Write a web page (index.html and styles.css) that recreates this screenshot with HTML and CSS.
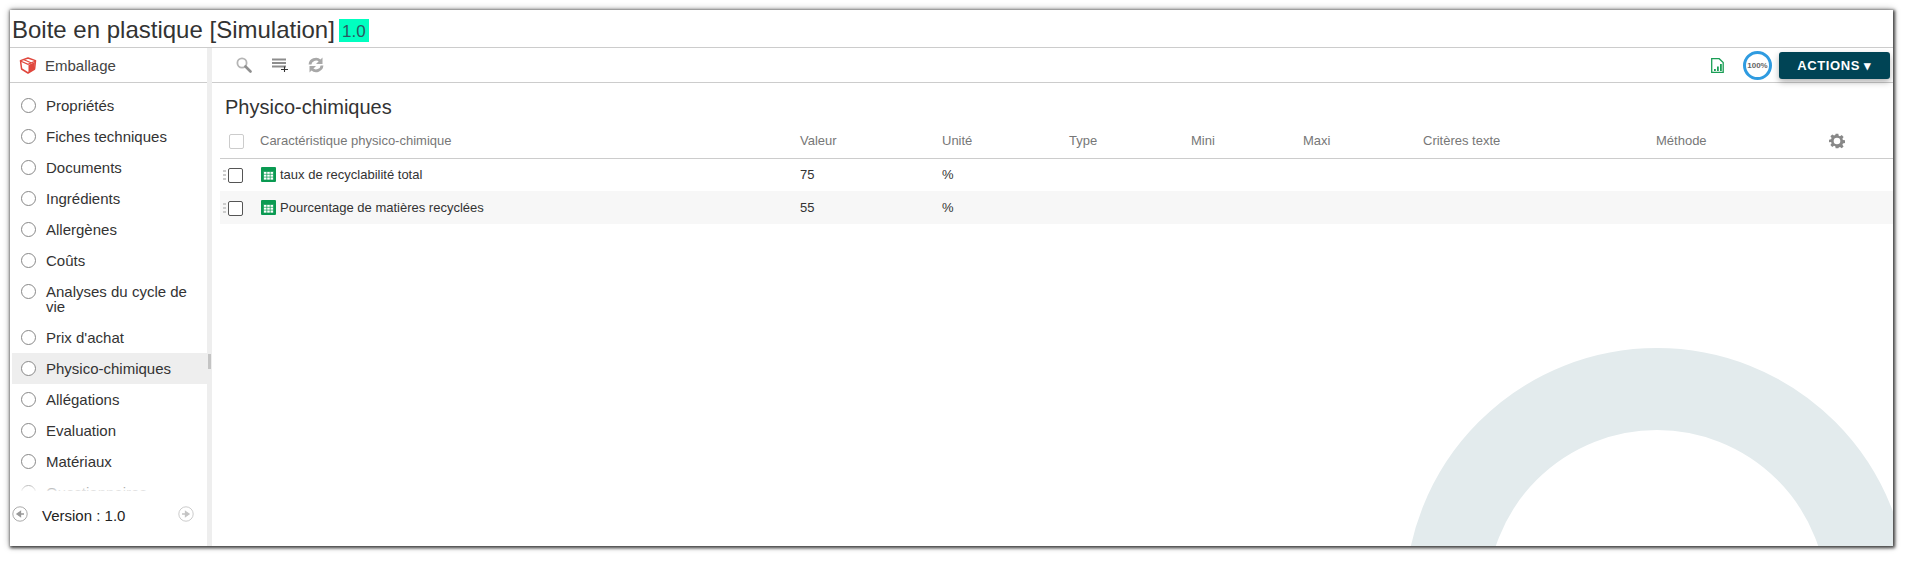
FILE: index.html
```html
<!DOCTYPE html>
<html lang="fr">
<head>
<meta charset="utf-8">
<title>Boite en plastique</title>
<link rel="stylesheet" href="styles.css">
</head>
<body>
<div class="window">
  <header class="title-bar">
    <h1 class="title">Boite en plastique [Simulation]</h1>
    <span class="version-badge">1.0</span>
  </header>
  <div class="workspace">
    <aside class="sidebar">
      <div class="sidebar-head">
        <svg class="box-icon" viewBox="0 0 18 17" width="18" height="17"><path d="M9 1 1.500 3.600 2.600 12 9 16l6.600-4 .9-8.400z" fill="#fff" stroke="#e0473d" stroke-width="1.500" stroke-linejoin="round"/><path d="M9.500 8v7.500l5.600-3.600.8-6.800z" fill="#e0473d"/><path d="M2 4.200 9 7.400l7-3.200M5 2.700l7 3" fill="none" stroke="#e0473d" stroke-width="1.200"/></svg>
        <span>Emballage</span>
      </div>
      <nav class="nav">
        <a class="nav-item"><i class="radio"></i><span>Propriétés</span></a>
        <a class="nav-item"><i class="radio"></i><span>Fiches techniques</span></a>
        <a class="nav-item"><i class="radio"></i><span>Documents</span></a>
        <a class="nav-item"><i class="radio"></i><span>Ingrédients</span></a>
        <a class="nav-item"><i class="radio"></i><span>Allergènes</span></a>
        <a class="nav-item"><i class="radio"></i><span>Coûts</span></a>
        <a class="nav-item"><i class="radio"></i><span>Analyses du cycle de vie</span></a>
        <a class="nav-item"><i class="radio"></i><span>Prix d'achat</span></a>
        <a class="nav-item active"><i class="radio"></i><span>Physico-chimiques</span></a>
        <a class="nav-item"><i class="radio"></i><span>Allégations</span></a>
        <a class="nav-item"><i class="radio"></i><span>Evaluation</span></a>
        <a class="nav-item"><i class="radio"></i><span>Matériaux</span></a>
        <a class="nav-item"><i class="radio"></i><span>Questionnaires</span></a>
        <div class="nav-fade"></div>
      </nav>
      <footer class="sidebar-foot">
        <svg class="ver-arrow" viewBox="0 0 16 16" width="16" height="16"><circle cx="8" cy="8" r="7.200" fill="#fff" stroke="#aaa"/><path d="M12 8H6M8.500 5.500 5 8l3.500 2.500z" fill="#999" stroke="#999" stroke-width="1.300"/></svg>
        <span class="ver-label">Version : 1.0</span>
        <svg class="ver-arrow" viewBox="0 0 16 16" width="16" height="16"><circle cx="8" cy="8" r="7.200" fill="#fff" stroke="#ccc"/><path d="M4 8h6M7.500 5.500 11 8l-3.500 2.500z" fill="#c4c4c4" stroke="#c4c4c4" stroke-width="1.300"/></svg>
      </footer>
    </aside>
    <div class="splitter"><span class="grip"></span></div>
    <main class="main">
      <div class="ring"></div>
      <div class="toolbar">
        <svg class="tool" viewBox="0 0 16 16" width="16" height="16"><circle cx="6" cy="6" r="4.600" fill="none" stroke="#b5b5b5" stroke-width="1.800"/><path d="m9.500 9.500 5 5" stroke="#8f8f8f" stroke-width="2.600" stroke-linecap="round"/></svg>
        <svg class="tool" viewBox="0 0 16 14" width="16" height="14"><path d="M0 1.500h14M0 5h14M0 8.500h14" stroke="#8d8d8d" stroke-width="1.800"/><path d="M9 11.500h7M12.500 8.500v5.500" stroke="#333" stroke-width="1.100"/></svg>
        <svg class="tool" viewBox="0 0 16 16" width="16" height="16"><path d="M2 7.500a6 5.600 0 0 1 10-3.800" fill="none" stroke="#a8a8a8" stroke-width="2.800"/><path d="M14.500 .5v6.500h-6.500z" fill="#a8a8a8"/><path d="M14 8.500a6 5.600 0 0 1-10 3.800" fill="none" stroke="#a8a8a8" stroke-width="2.800"/><path d="M1.500 15.500v-6.500h6.500z" fill="#a8a8a8"/></svg>
        <div class="toolbar-end">
          <svg class="doc" viewBox="0 0 13 15" width="13" height="15"><path d="M.7.700h7.500l4 3.800v9.800H.7z" fill="#fff" stroke="#1a9e55" stroke-width="1.300"/><path d="M3 11h1.800v2H3zM6 8.500h1.800V13H6zM9 6h1.800v7H9z" fill="#1a9e55"/></svg>
          <div class="progress">100%</div>
          <button class="actions">ACTIONS ▾</button>
        </div>
      </div>
      <h2 class="section-title">Physico-chimiques</h2>
      <table class="grid">
        <colgroup>
          <col class="c-check"><col class="c-name"><col class="c-val"><col class="c-unit"><col class="c-type"><col class="c-min"><col class="c-max"><col class="c-crit"><col class="c-meth"><col class="c-gear">
        </colgroup>
        <thead>
          <tr>
            <th><i class="check light"></i></th>
            <th>Caractéristique physico-chimique</th>
            <th>Valeur</th><th>Unité</th><th>Type</th><th>Mini</th><th>Maxi</th><th>Critères texte</th><th>Méthode</th>
            <th class="gear-cell"><svg viewBox="0 0 24 24" width="16" height="16"><path fill="#888" fill-rule="evenodd" d="M10 1h4l.6 3.100 1.900.8 2.600-1.800 2.800 2.800-1.800 2.600.8 1.900 3.100.6v4l-3.100.6-.8 1.900 1.800 2.600-2.800 2.800-2.600-1.800-1.900.8L14 23h-4l-.6-3.100-1.900-.8-2.600 1.800-2.800-2.800 1.800-2.600-.8-1.900L0 14v-4l3.100-.6.8-1.900L2.100 4.900l2.800-2.800 2.600 1.800 1.900-.8zM12 7a5 5 0 1 0 0 10 5 5 0 0 0 0-10z"/></svg></th>
          </tr>
        </thead>
        <tbody>
          <tr>
            <td class="check-cell"><i class="drag"></i><i class="check"></i></td>
            <td><span class="name-cell"><svg viewBox="0 0 15 15" width="15" height="15"><rect width="15" height="15" rx="1" fill="#0a9a52"/><path d="M2.500 4.500h10v8.500h-10zM2.500 7.300h10M2.500 10.100h10M5.800 4.500v8.500M9.200 4.500v8.500" fill="#fff" stroke="#0a9a52" stroke-width=".7"/></svg>taux de recyclabilité total</span></td>
            <td>75</td><td>%</td><td></td><td></td><td></td><td></td><td></td><td></td>
          </tr>
          <tr class="alt">
            <td class="check-cell"><i class="drag"></i><i class="check"></i></td>
            <td><span class="name-cell"><svg viewBox="0 0 15 15" width="15" height="15"><rect width="15" height="15" rx="1" fill="#0a9a52"/><path d="M2.500 4.500h10v8.500h-10zM2.500 7.300h10M2.500 10.100h10M5.800 4.500v8.500M9.200 4.500v8.500" fill="#fff" stroke="#0a9a52" stroke-width=".7"/></svg>Pourcentage de matières recyclées</span></td>
            <td>55</td><td>%</td><td></td><td></td><td></td><td></td><td></td><td></td>
          </tr>
        </tbody>
      </table>
    </main>
  </div>
</div>
</body>
</html>
```
FILE: styles.css
```css
* { box-sizing: border-box; }
html, body { margin: 0; height: 100%; background: #fff; overflow: hidden; }
body { padding: 10px 16px 16px 10px; font-family: "Liberation Sans", Arial, sans-serif; color: #333; }
.window {
  height: 536px; background: #fff; display: flex; flex-direction: column;
  box-shadow: 1px 1px 3px 1px rgba(0,0,0,.7), 0 0 7px rgba(0,0,0,.35);
}
.title-bar { height: 38px; flex: none; display: flex; align-items: flex-start; padding: 0 0 0 2px; border-bottom: 1px solid #ccc; }
.title { margin: 6px 0 0; font-size: 24px; line-height: 28px; font-weight: 400; color: #333; }
.version-badge { margin: 9px 0 0 4px; width: 30px; height: 23px; background: #00ffc0; color: #2a5a62; font-size: 17px; line-height: 26px; text-align: center; }
.workspace { flex: 1; display: flex; min-height: 0; }
.sidebar { width: 197px; flex: none; display: flex; flex-direction: column; }
.sidebar-head { height: 35px; flex: none; display: flex; align-items: center; gap: 8px; padding-left: 9px; font-size: 15px; color: #444; border-bottom: 1px solid #ccc; }
.nav { flex: 1; min-height: 0; overflow: hidden; position: relative; padding: 7px 0 0 2px; }
.nav-item { display: flex; align-items: flex-start; gap: 10px; padding: 8px 10px 8px 9px; font-size: 15px; line-height: 15px; color: #333; }
.nav-item.active { background: #eee; }
.radio { flex: none; width: 15px; height: 15px; border: 1px solid #888; border-radius: 50%; background: #fff; }
.nav-fade { position: absolute; left: 0; right: 0; bottom: 0; height: 6px; background: linear-gradient(rgba(255,255,255,.4), rgba(255,255,255,.9)); }
.sidebar-foot { height: 55px; flex: none; display: flex; align-items: flex-start; padding: 15px 0 0 2px; font-size: 15px; color: #222; }
.ver-label { margin: 1px 0 0 14px; width: 136px; line-height: 18px; }
.ver-arrow { flex: none; }
.splitter { width: 5px; flex: none; background: #eee; position: relative; }
.grip { position: absolute; left: 1px; top: 306px; width: 3px; height: 15px; background: #c4c4c4; }
.main { flex: 1; position: relative; overflow: hidden; min-width: 0; }
.ring { position: absolute; left: 1193px; top: 300px; width: 504px; height: 504px; border-radius: 50%; border: 82px solid #e3ebed; }
.toolbar { position: relative; height: 35px; display: flex; align-items: center; gap: 20px; padding: 0 3px 0 24px; border-bottom: 1px solid #ccc; }
.toolbar-end { margin-left: auto; display: flex; align-items: center; }
.doc { margin-right: 19px; }
.progress { width: 29px; height: 29px; border: 3px solid #2f9be0; border-radius: 50%; font-size: 8px; font-weight: 700; color: #666; line-height: 23px; text-align: center; margin-right: 7px; background: #fff; white-space: nowrap; }
.actions { width: 111px; height: 27px; border: 0; border-radius: 3px; background: #004455; color: #fff; font: 700 13px "Liberation Sans", Arial, sans-serif; letter-spacing: .6px; box-shadow: 0 3px 6px rgba(0,0,0,.3); }
.section-title { position: relative; margin: 12px 0 0 13px; font-size: 20px; line-height: 24px; font-weight: 400; color: #333; }
.grid { position: relative; margin: 5px 0 0 8px; width: 1673px; table-layout: fixed; border-collapse: collapse; font-size: 13px; }
.c-check { width: 40px; } .c-name { width: 540px; } .c-val { width: 142px; } .c-unit { width: 127px; } .c-type { width: 122px; } .c-min { width: 112px; } .c-max { width: 120px; } .c-crit { width: 233px; } .c-meth { width: 173px; } .c-gear { width: 64px; }
.grid th { height: 34px; padding: 0; font-weight: 400; text-align: left; color: #777; border-bottom: 1px solid #ccc; vertical-align: middle; }
.grid td { height: 33px; padding: 0; color: #333; vertical-align: middle; }
.alt td { background: #f7f7f7; }
.gear-cell svg { display: block; }
.check { display: inline-block; width: 15px; height: 15px; border: 1px solid #555; border-radius: 2px; background: #fff; vertical-align: middle; }
.check.light { border-color: #ccc; margin-left: 9px; }
.check-cell { white-space: nowrap; padding-left: 3px !important; }
.drag { display: inline-block; width: 3px; height: 10px; margin-right: 2px; vertical-align: middle; background: repeating-linear-gradient(#ccc 0 2px, transparent 2px 4px); }
.name-cell { display: flex; align-items: center; gap: 4px; padding-left: 1px; }
```
